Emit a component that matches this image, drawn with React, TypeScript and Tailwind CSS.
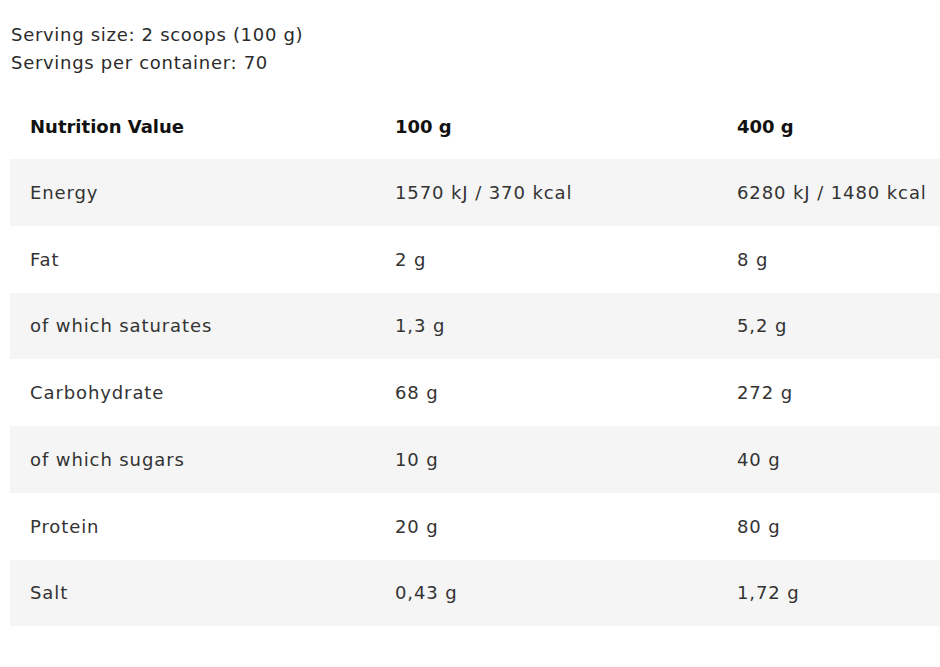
const rows: [string, string, string][] = [
  ["Energy", "1570 kJ / 370 kcal", "6280 kJ / 1480 kcal"],
  ["Fat", "2 g", "8 g"],
  ["of which saturates", "1,3 g", "5,2 g"],
  ["Carbohydrate", "68 g", "272 g"],
  ["of which sugars", "10 g", "40 g"],
  ["Protein", "20 g", "80 g"],
  ["Salt", "0,43 g", "1,72 g"],
];

export default function App() {
  return (
    <div
      className="w-[940px] h-[667px] overflow-hidden bg-white text-[#333]"
      style={{ fontFamily: "'DejaVu Sans', sans-serif" }}
    >
      <div className="pl-[11px] pt-[21px] text-[18px] leading-[28px] tracking-[0.7px] text-[#2b2b2b]">
        <div>Serving size: 2 scoops (100 g)</div>
        <div>Servings per container: 70</div>
      </div>
      <div className="mt-[16px] ml-[10px] w-[960px]">
        <div className="grid grid-cols-[365px_342px_1fr] h-[66px] items-center text-[18px] font-bold text-[#111]">
          <div className="pl-[20px]">Nutrition Value</div>
          <div className="pl-[20px]">100 g</div>
          <div className="pl-[20px]">400 g</div>
        </div>
        {rows.map((r, i) => (
          <div
            key={r[0]}
            className={`grid grid-cols-[365px_342px_1fr] h-[66.75px] items-center text-[18px] tracking-[0.9px] text-[#333] ${
              i % 2 === 0 ? "bg-[#f5f5f5]" : "bg-white"
            }`}
          >
            <div className="pl-[20px]">{r[0]}</div>
            <div className="pl-[20px]">{r[1]}</div>
            <div className="pl-[20px]">{r[2]}</div>
          </div>
        ))}
      </div>
    </div>
  );
}
